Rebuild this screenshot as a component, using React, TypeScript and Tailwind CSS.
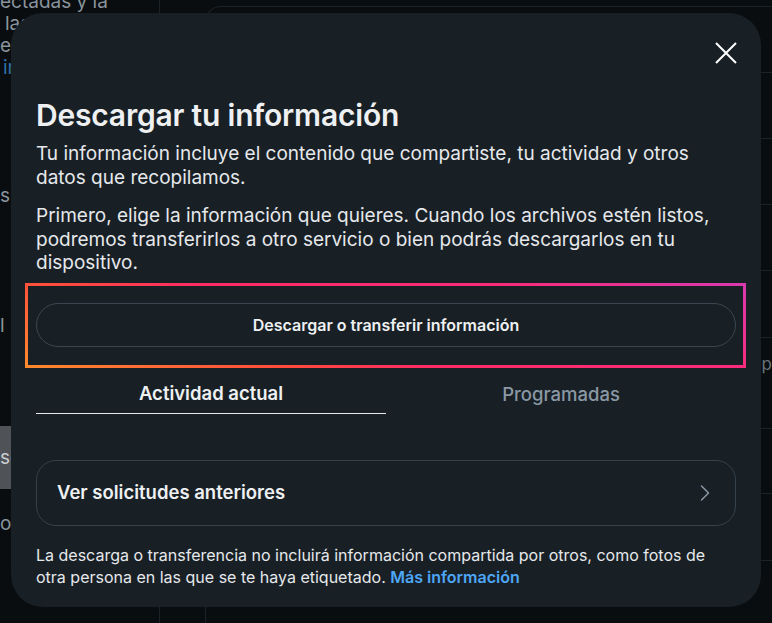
import { ChevronRight } from 'lucide-react';

const font = { fontFamily: 'Inter, "Noto Sans", "Liberation Sans", sans-serif' };

const rightRows = [66, 66, 66, 66, 67, 91, 65, 67, 63];

function Background() {
  return (
    <div className="flex h-[623px] w-[772px] bg-[#090d10] text-[#8a949c]">
      <div className="w-[160px] shrink-0 border-r border-[#1c2328] text-[19px] leading-[22px]">
        <p className="-mt-[9px]">ectadas y la</p>
        <p className="pl-[5px]">las</p>
        <p>eb</p>
        <p className="pl-[3px] text-[#2f6fa8]">ir</p>
        <p className="mt-[106px]">s</p>
        <p className="mt-[108px]">l</p>
        <div className="mt-[89px] flex h-[63px] w-[140px] items-center bg-[#4f5357] text-[#c9cdd0]">sc</div>
        <p className="mt-[24px]">os</p>
      </div>
      <div className="flex-1 pl-[45px] pt-[6px]">
        <div className="h-full rounded-tl-[16px] border-l border-t border-[#1c2328]">
          {rightRows.map((h, i) => (
            <div
              key={i}
              className="flex items-center justify-end border-b border-[#1c2328] text-[17px]"
              style={{ height: h }}
            >
              {i === 5 ? <span className="mb-[36px] text-[#6a737a]">op</span> : null}
            </div>
          ))}
        </div>
      </div>
    </div>
  );
}

export default function App() {
  return (
    <div className="relative h-[623px] w-[772px] overflow-hidden" style={font}>
      <Background />

      <div className="absolute left-[11px] top-[13px] flex h-[594px] w-[750px] flex-col rounded-[32px] bg-[#182026] px-[25px] text-[#e6e8eb]">
        <div className="flex justify-end pt-[29px]">
          <button className="-mr-px text-white">
            <svg width="22" height="22" viewBox="0 0 22 22" fill="none" stroke="currentColor" strokeWidth="2">
              <path d="M1 1L21 21M21 1L1 21" />
            </svg>
          </button>
        </div>

        <h2 className="mt-[33px] text-[30px] font-semibold leading-[36px] tracking-[-0.2px] text-[#eef0f2]">
          Descargar tu información
        </h2>
        <p className="mt-[9px] text-[19px] leading-[23.5px]">
          Tu información incluye el contenido que compartiste, tu actividad y otros datos que recopilamos.
        </p>
        <p className="mt-[15px] text-[19px] leading-[23.5px]">
          Primero, elige la información que quieres. Cuando los archivos estén listos, podremos transferirlos a otro
          servicio o bien podrás descargarlos en tu dispositivo.
        </p>

        <div className="-ml-[11px] -mr-[10px] mt-[8px] bg-[linear-gradient(20deg,#ff8a2e_0%,#ff4a3c_28%,#ff2d64_42%,#f82c7c_75%,#d83ab0_100%)] p-[3px]">
          <div className="bg-[#182026] pb-[18px] pl-[8px] pr-[7px] pt-[17px]">
            <button className="flex h-[44px] w-full items-center justify-center rounded-full border border-[#3b4650] text-[16px] font-semibold text-[#eef0f2]">
              Descargar o transferir información
            </button>
          </div>
        </div>

        <div className="flex">
          <div className="flex h-[46px] flex-1 items-center justify-center border-b border-[#e6e8eb] pt-[8px] text-[18.5px] font-semibold text-[#eef0f2]">
            Actividad actual
          </div>
          <div className="flex h-[46px] flex-1 items-center justify-center pt-[8px] text-[18.5px] font-medium text-[#8a98a4]">
            Programadas
          </div>
        </div>

        <button className="mt-[46px] flex h-[66px] w-full items-center justify-between rounded-[20px] border border-[#35414b] pl-[20px] pr-[16px] text-[18.5px] font-semibold text-[#eef0f2]">
          <span>Ver solicitudes anteriores</span>
          <ChevronRight size={28} strokeWidth={1.25} className="text-[#8c99a4]" />
        </button>

        <p className="mt-[18px] text-[16px] leading-[22px] text-[#e6e8eb]">
          La descarga o transferencia no incluirá información compartida por otros, como fotos de otra persona en las que
          se te haya etiquetado. <span className="font-semibold text-[#4ea6f5]">Más información</span>
        </p>
      </div>
    </div>
  );
}
